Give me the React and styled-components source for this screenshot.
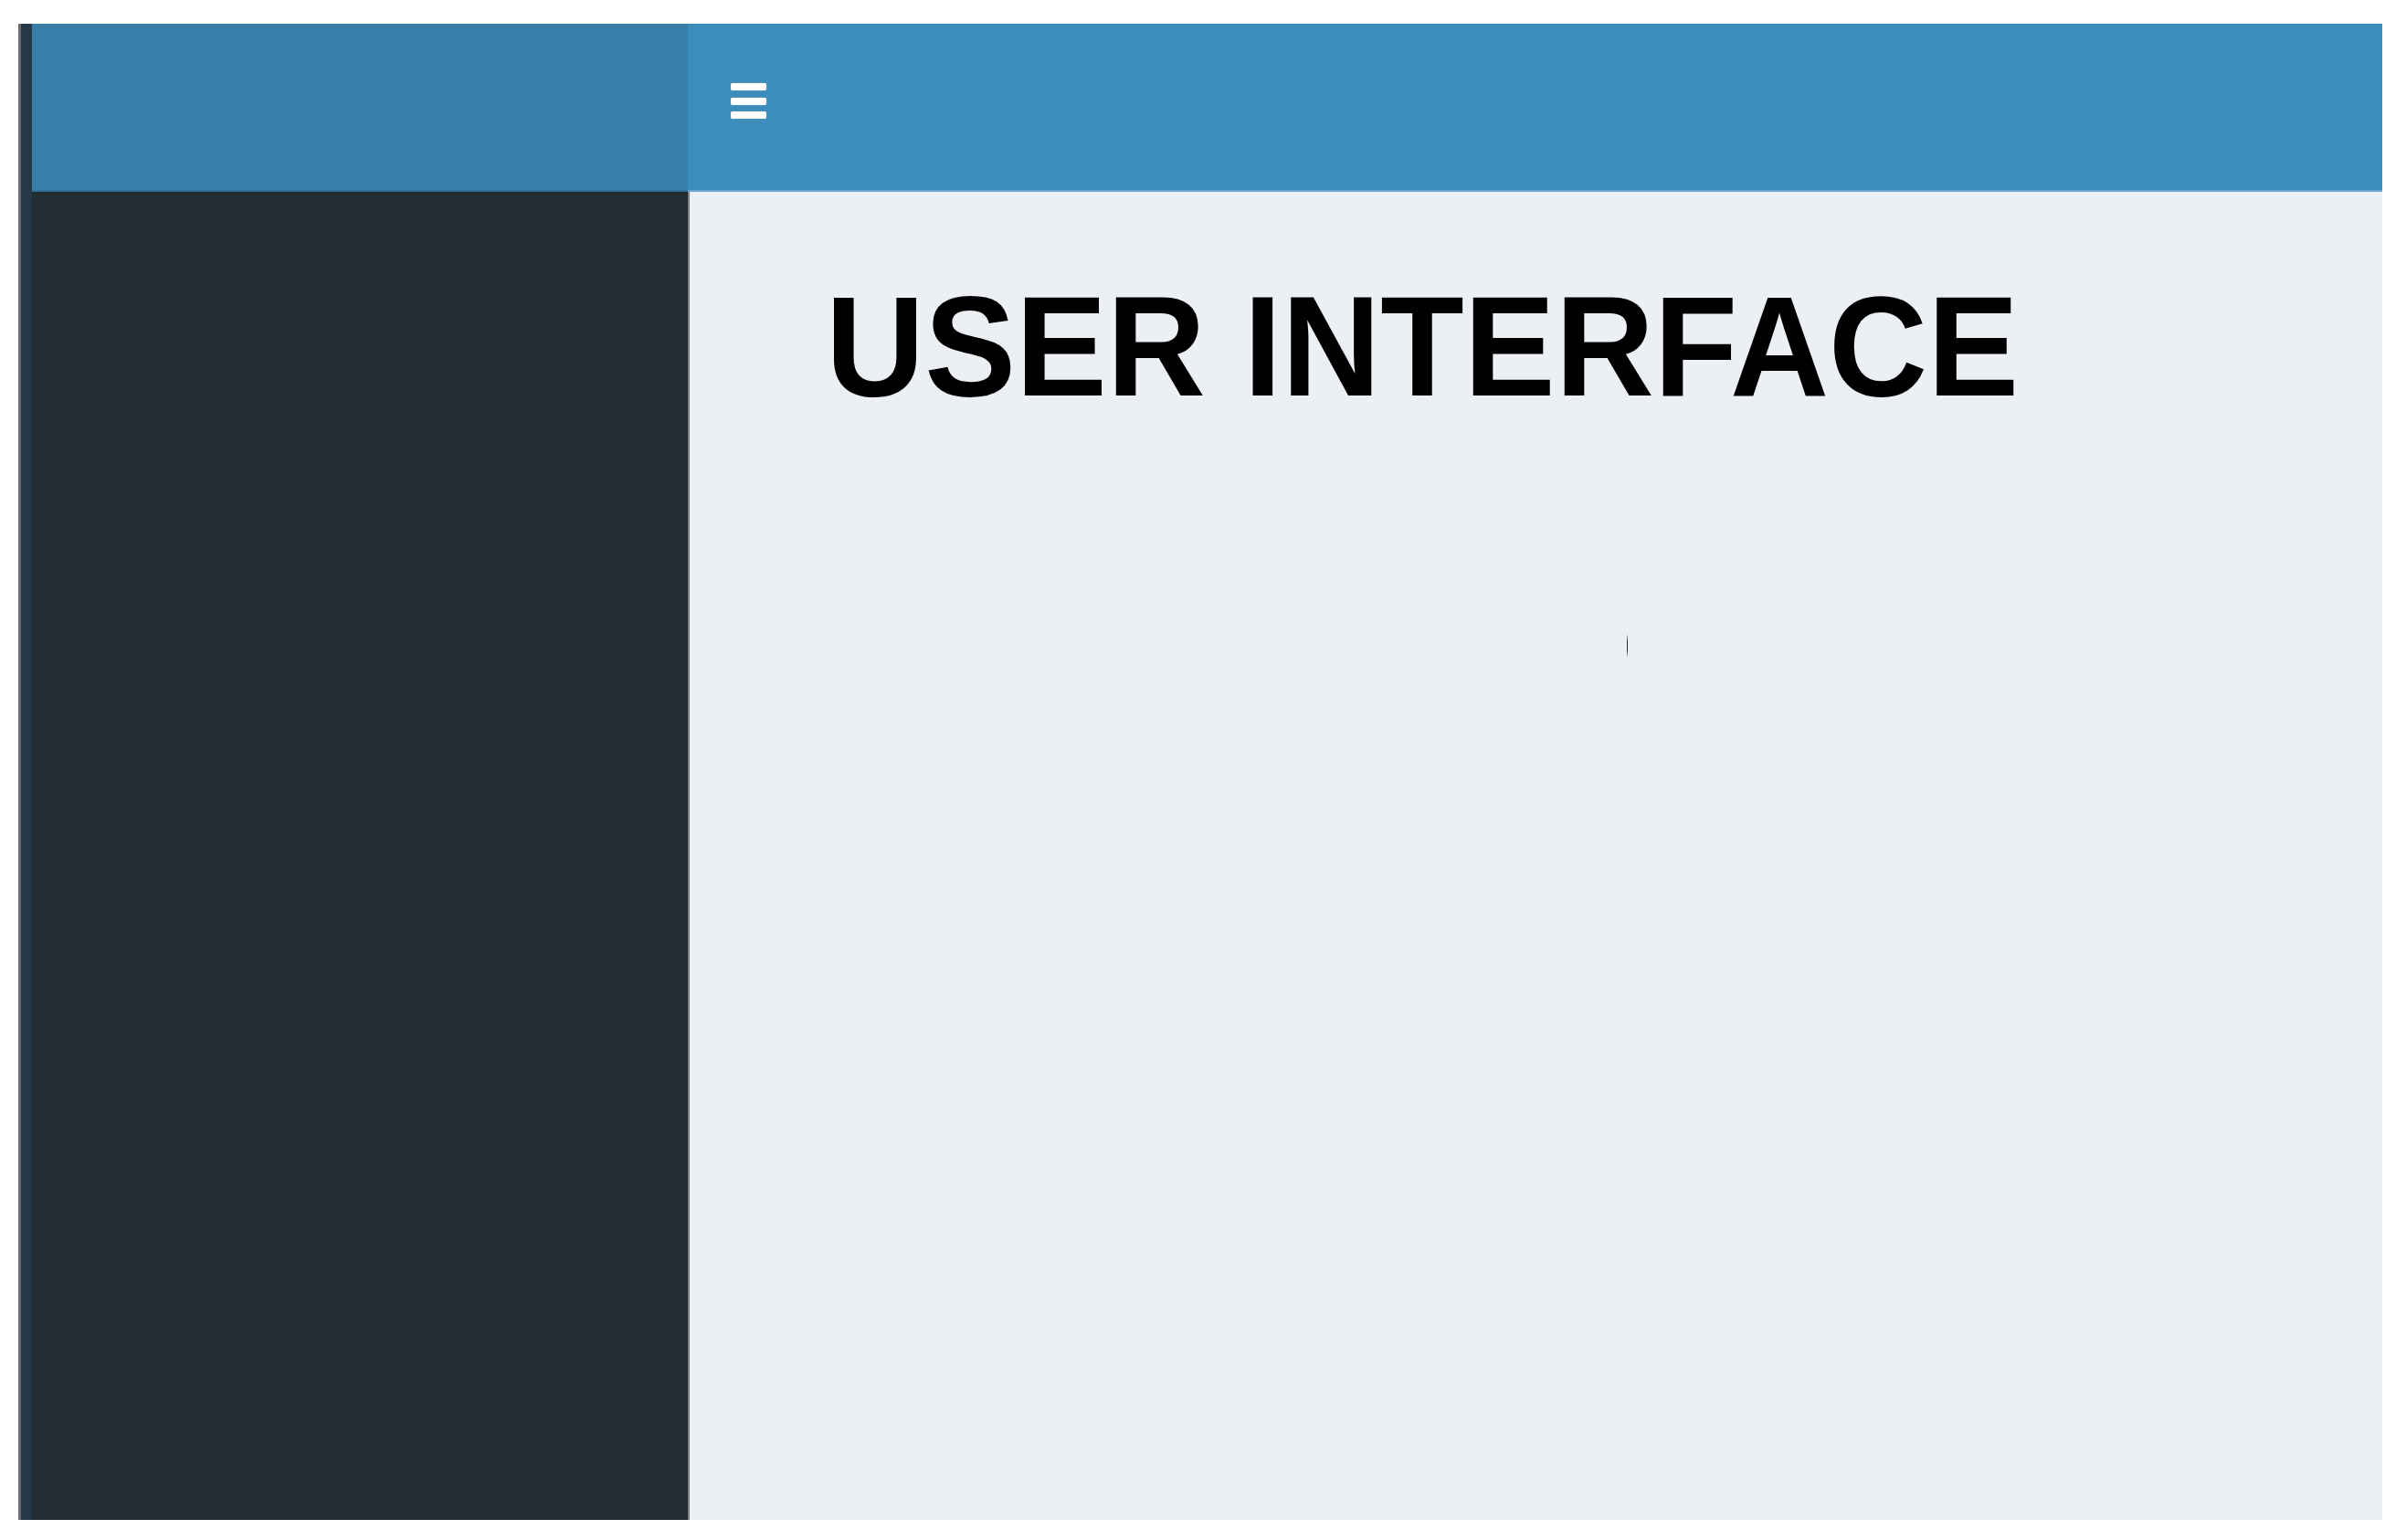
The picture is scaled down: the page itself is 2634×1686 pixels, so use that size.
import React from "react";
import styled, { createGlobalStyle } from "styled-components";

const GlobalStyle = createGlobalStyle`
  html, body {
    margin: 0;
    padding: 0;
    background: #ffffff;
  }
  body {
    font-family: "Liberation Sans", Arial, sans-serif;
  }
`;

const Frame = styled.div`
  display: flex;
  width: 2588px;
  height: 1638px;
  margin: 26px 0 0 20px;
`;

const EdgeStripe = styled.div`
  width: 12px;
  flex-shrink: 0;
  background: #263747;
  border-left: 3px solid #6c6c6c;
`;

const Shell = styled.div`
  flex: 1;
  display: flex;
  flex-direction: column;
  min-width: 0;
`;

const Header = styled.header`
  display: flex;
  height: 184px;
  flex-shrink: 0;
`;

const LogoArea = styled.div`
  width: 718px;
  background: #367fa9;
  border-bottom: 2px solid #2f7097;
`;

const Navbar = styled.nav`
  flex: 1;
  background: #3c8dbc;
  border-bottom: 2px solid #6aa6cd;
  padding: 65px 0 0 47px;
`;

const Toggle = styled.button`
  display: flex;
  flex-direction: column;
  gap: 7.5px;
  padding: 0;
  border: 0;
  background: none;
  cursor: pointer;
`;

const Bar = styled.span`
  display: block;
  width: 39px;
  height: 8px;
  border-radius: 2px;
  background: #ffffff;
  box-shadow: 0 0 1px rgba(255, 255, 255, 0.6);
`;

const Body = styled.div`
  flex: 1;
  display: flex;
`;

const Sidebar = styled.aside`
  width: 718px;
  background: #222d32;
  border-right: 2px solid #7d8185;
`;

const Content = styled.main`
  flex: 1;
  background: #ecf0f5;
  padding: 92px 0 0 149px;
`;

const Title = styled.h1`
  margin: 0;
  font-family: "Liberation Sans", Arial, sans-serif;
  font-weight: 700;
  font-size: 155px;
  line-height: 1;
  color: #000000;
  white-space: nowrap;
  transform: scaleX(0.966);
  transform-origin: left top;
`;

const Caret = styled.span`
  display: block;
  width: 1px;
  height: 24px;
  margin: 238px 0 0 877px;
  background: linear-gradient(
    to bottom,
    rgba(40, 40, 40, 0.2),
    #2a2a2a 30%,
    #2a2a2a 70%,
    rgba(40, 40, 40, 0.2)
  );
`;

export default function App() {
  return (
    <>
      <GlobalStyle />
      <Frame>
        <EdgeStripe />
        <Shell>
          <Header>
            <LogoArea />
            <Navbar>
              <Toggle aria-label="Toggle navigation">
                <Bar />
                <Bar />
                <Bar />
              </Toggle>
            </Navbar>
          </Header>
          <Body>
            <Sidebar />
            <Content>
              <Title>USER INTERFACE</Title>
              <Caret />
            </Content>
          </Body>
        </Shell>
      </Frame>
    </>
  );
}
